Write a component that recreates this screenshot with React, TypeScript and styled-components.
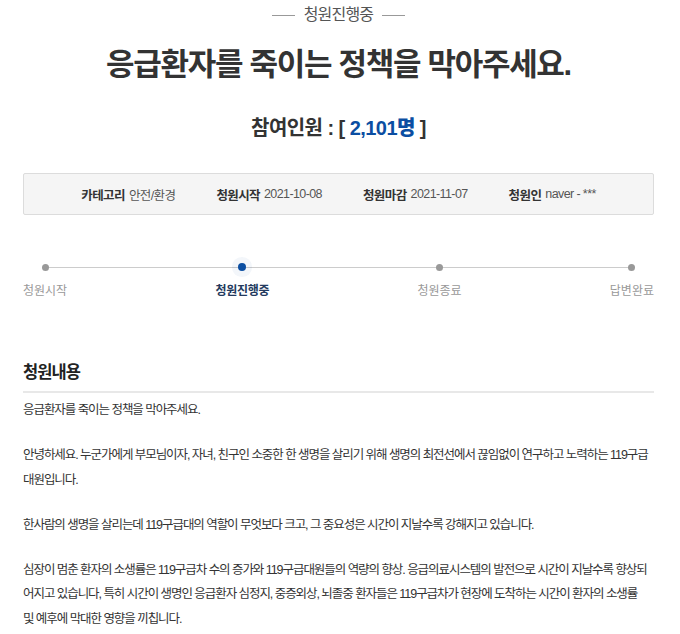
import styled, { createGlobalStyle } from "styled-components";

const GlobalStyle = createGlobalStyle`
  html, body {
    margin: 0;
    padding: 0;
    background: #fff;
    overflow: hidden;
  }
  body {
    font-family: "Liberation Sans", "Noto Sans CJK KR", sans-serif;
    color: #333;
  }
`;

interface InfoItem {
  label: string;
  value: string;
}

interface StepItem {
  label: string;
  active?: boolean;
}

const infos: InfoItem[] = [
  { label: "카테고리", value: "안전/환경" },
  { label: "청원시작", value: "2021-10-08" },
  { label: "청원마감", value: "2021-11-07" },
  { label: "청원인", value: "naver - ***" },
];

const steps: StepItem[] = [
  { label: "청원시작" },
  { label: "청원진행중", active: true },
  { label: "청원종료" },
  { label: "답변완료" },
];

const paragraphs: string[][] = [
  ["응급환자를 죽이는 정책을 막아주세요."],
  [
    "안녕하세요. 누군가에게 부모님이자, 자녀, 친구인 소중한 한 생명을 살리기 위해 생명의 최전선에서 끊임없이 연구하고 노력하는 119구급",
    "대원입니다.",
  ],
  ["한사람의 생명을 살리는데 119구급대의 역할이 무엇보다 크고, 그 중요성은 시간이 지날수록 강해지고 있습니다."],
  [
    "심장이 멈춘 환자의 소생률은 119구급차 수의 증가와 119구급대원들의 역량의 향상. 응급의료시스템의 발전으로 시간이 지날수록 향상되",
    "어지고 있습니다, 특히 시간이 생명인 응급환자 심정지, 중증외상, 뇌졸중 환자들은 119구급차가 현장에 도착하는 시간이 환자의 소생률",
    "및 예후에 막대한 영향을 끼칩니다.",
  ],
];

function App() {
  return (
    <>
      <GlobalStyle />
      <Page>
        <Status>청원진행중</Status>
        <Title>응급환자를 죽이는 정책을 막아주세요.</Title>
        <Count>
          참여인원 : [ <strong>2,101명</strong> ]
        </Count>

        <InfoBox>
          {infos.map((info) => (
            <Info key={info.label}>
              <b>{info.label}</b>
              <span>{info.value}</span>
            </Info>
          ))}
        </InfoBox>

        <Track>
          {steps.map((step) => (
            <Step key={step.label}>
              <Dot $active={step.active} />
              <StepLabel $active={step.active}>{step.label}</StepLabel>
            </Step>
          ))}
        </Track>

        <SectionTitle>청원내용</SectionTitle>
        <Content>
          {paragraphs.map((lines, i) => (
            <p key={i}>
              {lines.map((line, j) => (
                <span key={j}>
                  {line}
                  {j < lines.length - 1 && <br />}
                </span>
              ))}
            </p>
          ))}
        </Content>
      </Page>
    </>
  );
}

const Page = styled.div`
  padding: 5px 26px 0 23px;
  display: flex;
  flex-direction: column;
`;

const Status = styled.div`
  display: flex;
  align-items: center;
  justify-content: center;
  gap: 9px;
  font-size: 16px;
  line-height: 20px;
  letter-spacing: -0.8px;
  color: #555;

  &::before,
  &::after {
    content: "";
    width: 23px;
    height: 1px;
    background: #999;
  }
`;

const Title = styled.h1`
  margin: 20px 0 0;
  text-align: center;
  font-size: 31px;
  line-height: 40px;
  font-weight: 700;
  letter-spacing: -1.3px;
  color: #333;
`;

const Count = styled.div`
  margin-top: 29px;
  text-align: center;
  font-size: 20px;
  line-height: 28px;
  font-weight: 700;
  letter-spacing: -0.55px;
  color: #333;

  strong {
    color: #0b4ea2;
  }
`;

const InfoBox = styled.div`
  margin-top: 31px;
  height: 42px;
  box-sizing: border-box;
  border: 1px solid #dcdcdc;
  border-radius: 2px;
  background: #f5f5f5;
  display: flex;
  align-items: center;
  justify-content: center;
  gap: 41px;
`;

const Info = styled.div`
  display: flex;
  align-items: center;
  gap: 4px;
  font-size: 12.5px;
  letter-spacing: -0.6px;

  b {
    color: #333;
  }
  span {
    color: #555;
  }
`;

const Track = styled.div`
  position: relative;
  margin-top: 48px;
  display: flex;
  justify-content: space-between;

  &::before {
    content: "";
    position: absolute;
    top: 4px;
    left: 20px;
    right: 21px;
    height: 1px;
    background: #ccc;
  }
`;

const Step = styled.div`
  position: relative;
  display: flex;
  flex-direction: column;
  align-items: center;
  gap: 11px;
`;

const Dot = styled.span<{ $active?: boolean }>`
  width: ${(p) => (p.$active ? 8 : 7)}px;
  height: ${(p) => (p.$active ? 8 : 7)}px;
  margin-top: ${(p) => (p.$active ? 0 : 1)}px;
  border-radius: 50%;
  background: ${(p) => (p.$active ? "#0b4ea2" : "#999")};
  box-shadow: ${(p) => (p.$active ? "0 0 0 6px rgba(11, 78, 162, 0.05)" : "none")};
`;

const StepLabel = styled.span<{ $active?: boolean }>`
  font-size: 12px;
  line-height: 18px;
  letter-spacing: ${(p) => (p.$active ? -0.3 : 0)}px;
  font-weight: ${(p) => (p.$active ? 700 : 400)};
  color: ${(p) => (p.$active ? "#233a5e" : "#999")};
`;

const SectionTitle = styled.h2`
  margin: 60px 0 0;
  padding-bottom: 7px;
  border-bottom: 2px solid #e8e8e8;
  font-size: 16.5px;
  line-height: 24px;
  font-weight: 700;
  letter-spacing: -0.9px;
  color: #222;
`;

const Content = styled.div`
  margin-top: 5px;
  font-size: 12.5px;
  line-height: 24.5px;
  letter-spacing: -1.05px;
  color: #333;

  p {
    margin: 0 0 20.5px;
    white-space: nowrap;
  }
`;

export default App;
